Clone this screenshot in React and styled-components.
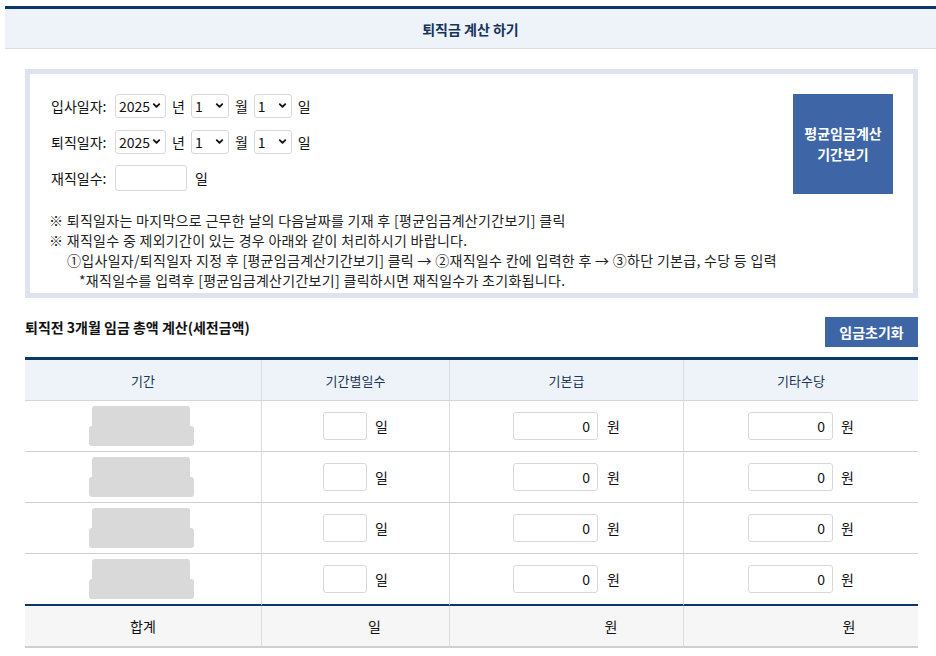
import React from 'react';
import styled, { createGlobalStyle } from 'styled-components';
import { ChevronDown } from 'lucide-react';

const GlobalStyle = createGlobalStyle`
  body {
    margin: 0;
    background: #ffffff;
    font-family: "Noto Sans CJK KR", "Noto Sans", sans-serif;
    color: #111;
  }
`;

const Page = styled.div`
  width: 936px;
  padding-top: 6px;
  overflow: hidden;
`;

const Header = styled.div`
  margin-left: 5px;
  height: 39px;
  border-top: 3px solid #0c3868;
  border-bottom: 1px solid #dcdcdc;
  background: #eef3fa;
  display: flex;
  align-items: center;
  justify-content: center;
  font-size: 14px;
  font-weight: 600;
  color: #14345a;
`;

const Content = styled.div`
  width: 893px;
  margin: 20px 0 0 25px;
`;

const InfoBox = styled.div`
  border: 5px solid #dee3ef;
  box-sizing: border-box;
  height: 229px;
  padding: 19px 20px 0 21px;
  display: flex;
  flex-direction: column;
`;

const InfoTop = styled.div`
  display: flex;
  justify-content: space-between;
`;

const Fields = styled.div`
  display: flex;
  flex-direction: column;
  gap: 10px;
  font-size: 14px;
`;

const FieldRow = styled.div`
  display: flex;
  align-items: center;
  height: 26px;
  gap: 6px;
  & > label {
    width: 64px;
    margin-right: -6px;
  }
`;

const SelectWrap = styled.div`
  position: relative;
  width: ${p => p.$w}px;
  height: 24px;
  svg {
    position: absolute;
    right: 4px;
    top: 6px;
    pointer-events: none;
  }
`;

const Select = styled.select`
  appearance: none;
  width: 100%;
  height: 100%;
  border: 1px solid #d8d8d8;
  border-radius: 3px;
  background: #fff;
  font-family: "Noto Sans CJK KR", sans-serif;
  font-size: 14px;
  color: #111;
  padding: 0 0 0 3px;
`;

const DaysInput = styled.input`
  width: 72px;
  height: 26px;
  box-sizing: border-box;
  border: 1px solid #d8d8d8;
  border-radius: 3px;
  margin-right: 2px;
`;

const CalcButton = styled.button`
  width: 100px;
  height: 100px;
  margin-top: 1px;
  border: none;
  background: #3e66a6;
  color: #fff;
  font-family: "Noto Sans CJK KR", sans-serif;
  font-size: 14px;
  font-weight: 700;
  line-height: 21px;
`;

const Notes = styled.div`
  margin-top: 16px;
  font-size: 14px;
  letter-spacing: 0.3px;
  line-height: 20px;
  color: #222;
  margin-left: -2px;
`;

const Note = styled.div`
  padding-left: ${p => p.$indent || 0}px;
  white-space: nowrap;
`;

const SectionHead = styled.div`
  margin-top: 19px;
  height: 30px;
  display: flex;
  justify-content: space-between;
  align-items: center;
`;

const SectionTitle = styled.h3`
  margin: 0 0 11px;
  font-size: 14px;
  font-weight: 700;
  color: #111;
`;

const ResetButton = styled.button`
  width: 93px;
  height: 30px;
  border: none;
  background: #3e66a6;
  color: #fff;
  font-family: "Noto Sans CJK KR", sans-serif;
  font-size: 14px;
  font-weight: 700;
`;

const Table = styled.div`
  margin-top: 10px;
  border-top: 3px solid #0c3868;
  display: grid;
  grid-template-columns: 236px 188px 234px 235px;
`;

const HeadCell = styled.div`
  height: 40px;
  background: #eef3fa;
  display: flex;
  align-items: center;
  justify-content: center;
  font-size: 13px;
  color: #1c3553;
  border-bottom: 1px solid #d6d6d6;
  border-left: ${p => (p.$first ? 'none' : '1px solid #dcdcdc')};
`;

const Cell = styled.div`
  height: ${p => (p.$total ? 40 : 50)}px;
  display: flex;
  align-items: center;
  justify-content: center;
  gap: ${p => p.$gap || 9}px;
  font-size: 14px;
  background: ${p => (p.$total ? '#f6f6f6' : '#fff')};
  border-bottom: ${p => (p.$total ? '2px solid #cfcfcf' : p.$last ? '2px solid #0c3868' : '1px solid #cfcfcf')};
  border-left: ${p => (p.$first ? 'none' : '1px solid #dcdcdc')};
  padding-left: ${p => p.$shift || 0}px;
  padding-right: ${p => p.$shiftR || 0}px;
`;

const Blur = styled.div`
  display: flex;
  flex-direction: column;
  align-items: center;
  div {
    background: #d9d9d9;
    border-radius: 3px;
  }
  div:first-child {
    width: 98px;
    height: 22px;
  }
  div:last-child {
    width: 105px;
    height: 20px;
    margin-top: -2px;
  }
`;

const NumInput = styled.input`
  width: ${p => p.$w}px;
  height: 28px;
  box-sizing: border-box;
  border: 1px solid #d8d8d8;
  border-radius: 3px;
  text-align: right;
  padding: 0 7px 0 0;
  font-family: "Noto Sans CJK KR", sans-serif;
  font-size: 14px;
  color: #111;
`;

const Spacer = styled.span`
  display: inline-block;
  width: ${p => p.$w}px;
`;

function Sel({ w, value }) {
  return (
    <SelectWrap $w={w}>
      <Select defaultValue={value}>
        <option>{value}</option>
      </Select>
      <ChevronDown size={11} strokeWidth={4} />
    </SelectWrap>
  );
}

function DateRow({ label }) {
  return (
    <FieldRow>
      <label>{label}</label>
      <Sel w={51} value="2025" />
      <span>년</span>
      <Sel w={38} value="1" />
      <span>월</span>
      <Sel w={38} value="1" />
      <span>일</span>
    </FieldRow>
  );
}

const rows = [0, 1, 2, 3];

export default function App() {
  return (
    <>
      <GlobalStyle />
      <Page>
        <Header>퇴직금 계산 하기</Header>
        <Content>
          <InfoBox>
            <InfoTop>
              <Fields>
                <DateRow label="입사일자:" />
                <DateRow label="퇴직일자:" />
                <FieldRow>
                  <label>재직일수:</label>
                  <DaysInput />
                  <span>일</span>
                </FieldRow>
              </Fields>
              <CalcButton>평균임금계산<br />기간보기</CalcButton>
            </InfoTop>
            <Notes>
              <Note>※ 퇴직일자는 마지막으로 근무한 날의 다음날짜를 기재 후 [평균임금계산기간보기] 클릭</Note>
              <Note>※ 재직일수 중 제외기간이 있는 경우 아래와 같이 처리하시기 바랍니다.</Note>
              <Note $indent={18}>①입사일자/퇴직일자 지정 후 [평균임금계산기간보기] 클릭 → ②재직일수 칸에 입력한 후 → ③하단 기본급, 수당 등 입력</Note>
              <Note $indent={30}>*재직일수를 입력후 [평균임금계산기간보기] 클릭하시면 재직일수가 초기화됩니다.</Note>
            </Notes>
          </InfoBox>

          <SectionHead>
            <SectionTitle>퇴직전 3개월 임금 총액 계산(세전금액)</SectionTitle>
            <ResetButton>임금초기화</ResetButton>
          </SectionHead>

          <Table>
            <HeadCell $first>기간</HeadCell>
            <HeadCell>기간별일수</HeadCell>
            <HeadCell>기본급</HeadCell>
            <HeadCell>기타수당</HeadCell>
            {rows.map(i => (
              <React.Fragment key={i}>
                <Cell $first $last={i === 3} $shiftR={4}>
                  <Blur><div /><div /></Blur>
                </Cell>
                <Cell $last={i === 3} $gap={8}>
                  <NumInput $w={44} defaultValue="" />
                  <span>일</span>
                </Cell>
                <Cell $last={i === 3}>
                  <NumInput $w={85} defaultValue="0" />
                  <span>원</span>
                </Cell>
                <Cell $last={i === 3} $gap={8}>
                  <NumInput $w={85} defaultValue="0" />
                  <span>원</span>
                </Cell>
              </React.Fragment>
            ))}
            <Cell $first $total>합계</Cell>
            <Cell $total><Spacer $w={29} /><span>일</span></Cell>
            <Cell $total $shift={1}><Spacer $w={79} /><span>원</span></Cell>
            <Cell $total $shift={2}><Spacer $w={85} /><span>원</span></Cell>
          </Table>
        </Content>
      </Page>
    </>
  );
}
